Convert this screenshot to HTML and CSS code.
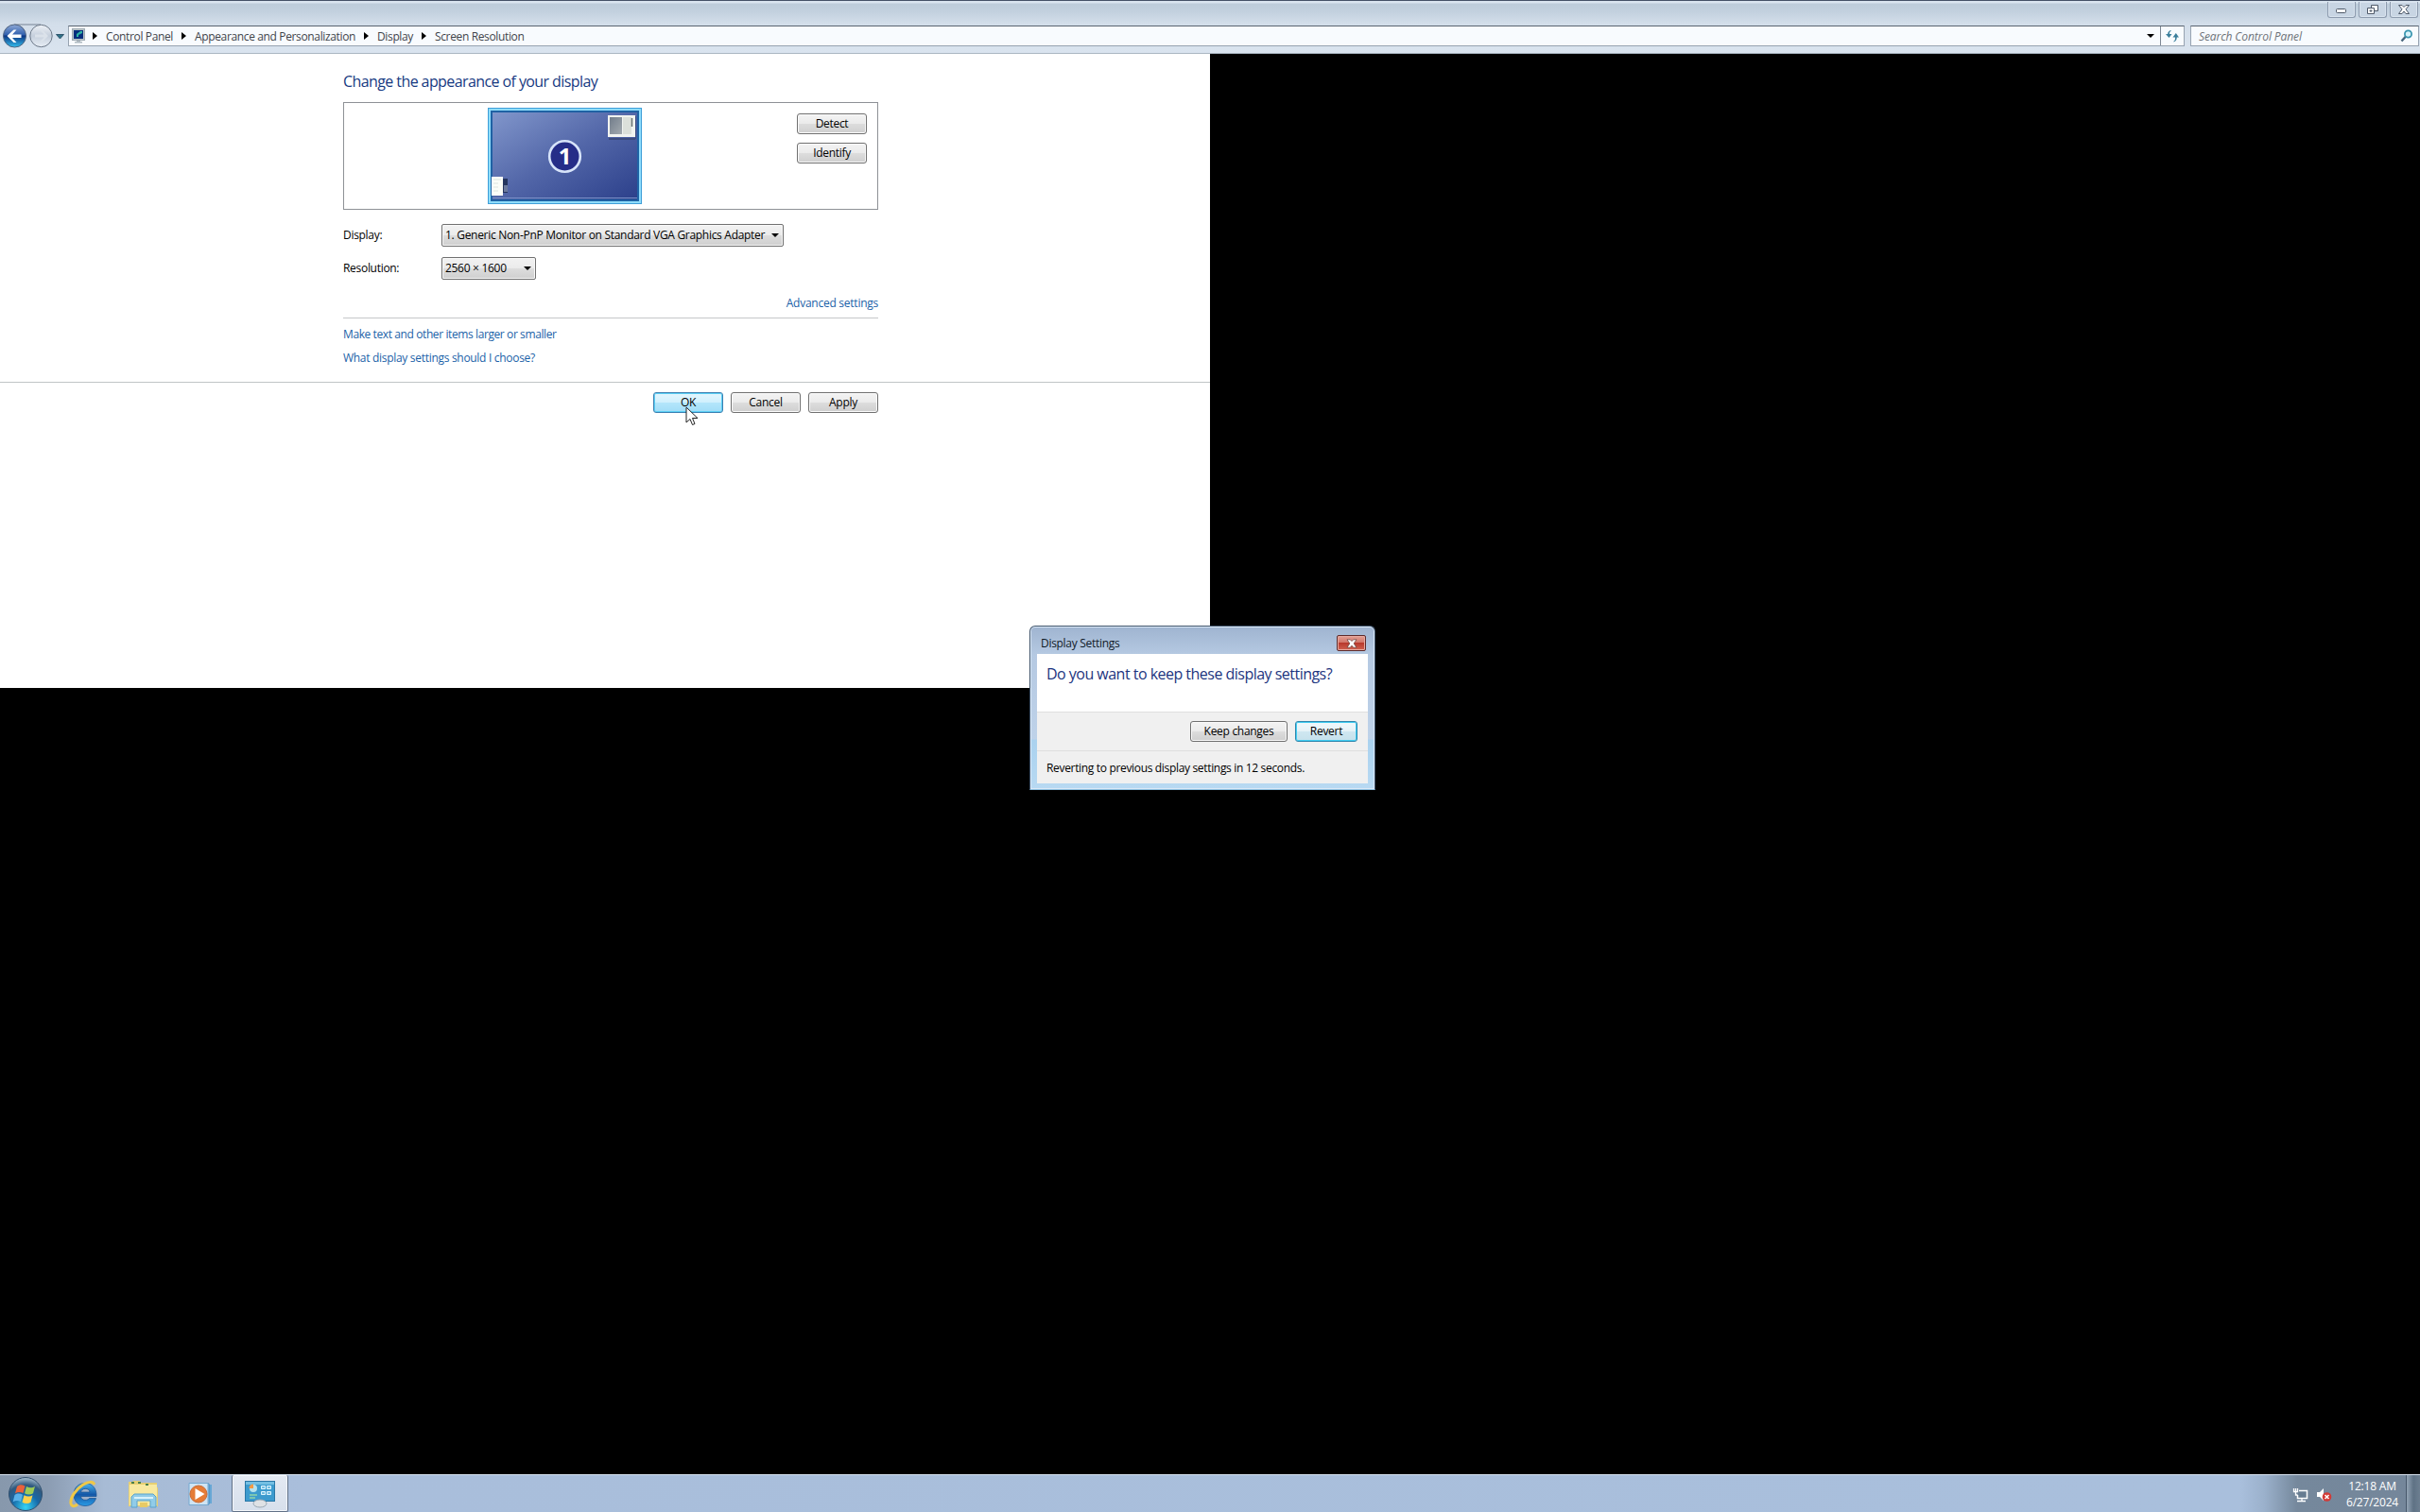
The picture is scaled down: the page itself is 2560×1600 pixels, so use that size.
FILE: index.html
```html
<!DOCTYPE html>
<html lang="en">
<head>
    <meta charset="UTF-8">
    <meta name="viewport" content="width=device-width, initial-scale=1.0">
    <title>Screen Resolution</title>
    <link rel="stylesheet" href="styles.css">
</head>
<body>
    <div class="desktop">
        <header class="explorer-bar">
            <div class="caption">
                <button class="caption-btn" aria-label="Minimize">
                    <svg width="14" height="12" viewBox="0 0 14 12"><rect x="1.5" y="5.5" width="10" height="4" rx="1" fill="#fff" stroke="#4d5868"/></svg>
                </button>
                <button class="caption-btn" aria-label="Restore">
                    <svg width="14" height="12" viewBox="0 0 14 12" fill="#fff" stroke="#4d5868"><path d="M5.500 1.500h7v6h-7z"/><path d="M1.500 4.500h7v6h-7z"/><path d="M4 7h2v1h-2z"/></svg>
                </button>
                <button class="caption-btn" aria-label="Close">
                    <svg width="14" height="12" viewBox="0 0 14 12"><path d="M1.500 1.500h3.500l2 2 2-2h3.500l-3.500 4.300 3.500 4.700H9l-2-2.500-2 2.500H1.500L5 5.800z" fill="#fff" stroke="#4d5868"/></svg>
                </button>
            </div>
            <div class="nav">
                <svg class="travel" width="72" height="28" viewBox="0 0 72 28">
                    <defs>
                        <linearGradient id="back" x1="0" y1="0" x2="0" y2="1">
                            <stop offset="0" stop-color="#8fa9d6"/>
                            <stop offset=".45" stop-color="#3160ae"/>
                            <stop offset=".5" stop-color="#0c3684"/>
                            <stop offset="1" stop-color="#35c0ee"/>
                        </linearGradient>
                        <linearGradient id="fwd" x1="0" y1="0" x2="0" y2="1">
                            <stop offset="0" stop-color="#eef2f7"/>
                            <stop offset=".5" stop-color="#c5cfdc"/>
                            <stop offset="1" stop-color="#e8eef5"/>
                        </linearGradient>
                    </defs>
                    <path d="M15 2h28" stroke="#a4b0bf" stroke-width="2"/>
                    <circle cx="15.500" cy="14" r="12" fill="url(#back)" stroke="#4f6380"/>
                    <path d="M7.500 14l7-6.500h3l-4.500 5h9.500v3.500H13l4.500 5h-3z" fill="#fff"/>
                    <circle cx="43.500" cy="14" r="11.700" fill="url(#fwd)" stroke="#6c7888"/>
                    <path d="M51 14l-6-6h-2.500l4 4.500H37v3h9.500l-4 4.500H45z" fill="#dbe2ea"/>
                    <path d="M59.500 12.500h8l-4 4.500z" fill="#2f7186" stroke="#31566e"/>
                </svg>
                <div class="address">
                    <svg class="monitor-icon" width="16" height="16" viewBox="0 0 16 16">
                        <rect x=".5" y=".5" width="13" height="12" fill="#b9c4c9" stroke="#9faab2"/>
                        <rect x="2" y="2" width="10" height="9" fill="#062e7c"/>
                        <path d="M5 9V6l4-3h2v2L7 7v2z" fill="#2eb3a4"/>
                        <path d="M5 13h4v1h2v1.500H3V14h2z" fill="#aeb9c0"/>
                    </svg>
                    <i class="crumb-arrow first"></i>
                    <span>Control Panel</span>
                    <i class="crumb-arrow"></i>
                    <span>Appearance and Personalization</span>
                    <i class="crumb-arrow"></i>
                    <span>Display</span>
                    <i class="crumb-arrow"></i>
                    <span>Screen Resolution</span>
                    <i class="down-arrow"></i>
                    <div class="refresh">
                        <svg width="16" height="16" viewBox="0 0 16 16" fill="#3b7f9c"><path d="M6.500 2v1C5 3.500 5 5 5 6h2.500L4.500 10 1 6h2.200C3.200 4 4.500 2.500 6.500 2z"/><path d="M9.500 14.500v-1C11 13 11 11.500 11 9.500H8.500L11.800 5l3.200 4.500h-2.200c0 2.500-1.300 4.500-3.300 5z"/></svg>
                    </div>
                </div>
                <div class="search">
                    <span>Search Control Panel</span>
                    <svg width="14" height="14" viewBox="0 0 14 14" fill="none"><path d="M1.500 12.500l4.500-5" stroke="#48657c" stroke-width="2.400"/><circle cx="8.500" cy="5" r="3.600" fill="#d8f3fa" stroke="#3a96b0" stroke-width="1.800"/></svg>
                </div>
            </div>
        </header>

        <main class="content">
            <section class="settings">
                <h1>Change the appearance of your display</h1>
                <div class="preview">
                    <div class="monitor">
                        <svg width="163" height="102" viewBox="0 0 163 102">
                            <defs>
                                <linearGradient id="screen" x1="0" y1="0" x2="1" y2="1">
                                    <stop offset="0" stop-color="#8196cb"/>
                                    <stop offset=".5" stop-color="#5266a8"/>
                                    <stop offset="1" stop-color="#2c408b"/>
                                </linearGradient>
                                <linearGradient id="pane" x1="0" y1="0" x2="1" y2="1">
                                    <stop offset="0" stop-color="#727d8b"/>
                                    <stop offset="1" stop-color="#a3aaaf"/>
                                </linearGradient>
                            </defs>
                            <rect width="163" height="102" fill="#3f9fd8"/>
                            <rect x="1" y="1" width="161" height="100" fill="#8edcfb"/>
                            <rect x="3" y="3" width="157" height="96" fill="#1f62a4"/>
                            <rect x="5" y="5" width="153" height="92" fill="url(#screen)"/>
                            <path d="M5 95.500h153" stroke="#7991c7"/>
                            <path d="M128 32h28v2h-28zM156 9h1v24h-1z" fill="#3c4b7e"/>
                            <rect x="127" y="8" width="29" height="23" fill="#f1f3f0"/>
                            <rect x="129" y="10" width="13" height="18" fill="url(#pane)"/>
                            <rect x="143" y="10" width="9" height="18" fill="#dce0da"/>
                            <path d="M152.500 11v9" stroke="#687173" stroke-width="1.500"/>
                            <rect x="4" y="73" width="12" height="20" fill="#fbfdf8"/>
                            <path d="M6 76h8M6 80h5M6 84h5M6 88h5" stroke="#dde4df"/>
                            <rect x="16" y="75" width="5" height="15" fill="#25355f"/>
                            <path d="M17 82h4v7h-4z" fill="#6c7a9e"/>
                            <circle cx="81.500" cy="51.500" r="16.300" fill="#252d88" stroke="#d7e4fa" stroke-width="2.600"/>
                        </svg>
                        <span class="monitor-number">1</span>
                    </div>
                    <div class="preview-buttons">
                        <button class="btn">Detect</button>
                        <button class="btn">Identify</button>
                    </div>
                </div>
                <div class="row">
                    <label>Display:</label>
                    <div class="select wide"><span>1. Generic Non-PnP Monitor on Standard VGA Graphics Adapter</span><i class="down-arrow"></i></div>
                </div>
                <div class="row">
                    <label>Resolution:</label>
                    <div class="select"><span>2560 × 1600</span><i class="down-arrow"></i></div>
                </div>
                <a class="advanced">Advanced settings</a>
                <div class="links">
                    <a class="link-larger">Make text and other items larger or smaller</a>
                    <a class="link-choose">What display settings should I choose?</a>
                </div>
            </section>
            <footer class="actions">
                <button class="btn hot">OK</button>
                <button class="btn">Cancel</button>
                <button class="btn">Apply</button>
            </footer>
        </main>

        <div class="dialog">
            <div class="dialog-title">
                <span>Display Settings</span>
                <button class="dialog-close" aria-label="Close">
                    <svg width="12" height="10" viewBox="0 0 12 10"><path d="M1 .8h3.300L6 2.500 7.700.8H11L8.200 4.900 11 9.200H7.700L6 7.200 4.300 9.200H1l2.800-4.300z" fill="#fff" stroke="#70453f" stroke-width=".8"/></svg>
                </button>
            </div>
            <div class="dialog-body">
                <p class="question">Do you want to keep these display settings?</p>
                <div class="dialog-buttons">
                    <button class="btn keep">Keep changes</button>
                    <button class="btn default">Revert</button>
                </div>
                <p class="countdown">Reverting to previous display settings in 12 seconds.</p>
            </div>
        </div>

        <footer class="taskbar">
            <svg class="orb" width="38" height="38" viewBox="0 0 38 38">
                <defs>
                    <radialGradient id="orb" cx=".5" cy=".9" r=".9">
                        <stop offset="0" stop-color="#35d4f5"/>
                        <stop offset=".45" stop-color="#1769a8"/>
                        <stop offset=".75" stop-color="#31597e"/>
                        <stop offset="1" stop-color="#a9c1d2"/>
                    </radialGradient>
                </defs>
                <circle cx="19" cy="19" r="17.500" fill="url(#orb)" stroke="#31506f"/>
                <path d="M10 11c3-2.500 5.500-2 8.500-.5l-2 7.500c-3-1.500-5.500-1.500-8.500.3z" fill="#e9623b"/>
                <path d="M20 11c3 1.500 6 1.800 9-.3l-2 7.600c-3 2-6 1.500-9 0z" fill="#9fcb56"/>
                <path d="M7.500 20c3-2 5.500-1.800 8.500-.3l-2 7.300c-3-1.500-5.500-1.300-8.300.3z" fill="#5ab1e8"/>
                <path d="M17.500 20.300c3 1.500 6 1.800 9 0l-2 7.500c-3 2-6 1.500-9 0z" fill="#fbd04c"/>
            </svg>
            <svg class="task-icon ie" width="32" height="32" viewBox="0 0 32 32">
                <defs>
                    <linearGradient id="ie" x1="0" y1="0" x2="0" y2="1">
                        <stop offset="0" stop-color="#4cb7ef"/>
                        <stop offset=".5" stop-color="#1458a8"/>
                        <stop offset="1" stop-color="#2a9be5"/>
                    </linearGradient>
                </defs>
                <path d="M29 18.500H12.500c.3 2.500 2 3.800 4.500 3.800 2.200 0 3.500-.6 4.500-1.800h7C27 25.500 23 28.500 17 28.500 10 28.500 5 23.500 5 16.500S10 4.500 17 4.500s12.500 5 12 14zM22 14c-.4-2.500-2-3.600-4.700-3.600s-4.300 1.300-4.800 3.600z" fill="url(#ie)" stroke="#174f8f" stroke-width=".7"/>
                <path d="M27 6C25 2 20 3 15 6 7 11 1 20 2 26c.8 3.500 4 3.500 7 1" fill="none" stroke="#efc847" stroke-width="3"/>
            </svg>
            <svg class="task-icon folder" width="32" height="30" viewBox="0 0 32 30">
                <path d="M0 2h4l1-1h7v2h18v5h1v20H0z" fill="#e7cf72"/>
                <path d="M1 5h29v22H1z" fill="#f8e9a0"/>
                <path d="M3 3h3M10 3h3M18 5h3" stroke="#49804a" stroke-width="2"/>
                <path d="M3 29V18l3-3h20l3 3v11h-6v-7H9v7z" fill="#91cce8" stroke="#5aa3cd"/>
                <path d="M6 19h20" stroke="#d9f2fb" stroke-width="2"/>
                <path d="M12 29v-5h8v5" fill="#e8ca65"/>
            </svg>
            <svg class="task-icon wmp" width="28" height="28" viewBox="0 0 28 28">
                <path d="M7 4h18v20H7z" fill="#67a7d5"/>
                <path d="M4 3h18v22H4z" fill="#a2c9e5" stroke="#458cc0"/>
                <path d="M1 2.500h20v23H1z" fill="#cfe4f3" stroke="#76a9d0"/>
                <circle cx="11" cy="14" r="9" fill="#e57c36" stroke="#c86b37"/>
                <path d="M7.500 8l10 6-10 6z" fill="#fff"/>
            </svg>
            <div class="task-button">
                <svg width="34" height="30" viewBox="0 0 34 30">
                    <rect x="1.500" y="1.500" width="31" height="21" fill="#3c9bce" stroke="#2a78a7"/>
                    <path d="M2 2h30v3H2z" fill="#73bfe2"/>
                    <circle cx="10" cy="9" r="4" fill="#b6e2ee"/><path d="M10 9V4.500A4.500 4.500 0 0 0 5.500 9z" fill="#f19a45"/>
                    <path d="M6 16h8M6 19h6" stroke="#8fd3a9" stroke-width="1.500"/>
                    <path d="M18.500 6.500h4v3h-4zM24.500 6.500h4v3h-4zM18.500 12.500h4v3h-4zM24.500 12.500h4v3h-4z" fill="#75bfe2" stroke="#def4fd"/>
                    <ellipse cx="17" cy="25" rx="7" ry="4" fill="#dfe2e5" stroke="#9aa8b4"/>
                </svg>
            </div>
            <div class="tray">
                <svg width="18" height="16" viewBox="0 0 18 16" fill="none" stroke="#fff"><path d="M7 3.500h8.500v8H5.500V8" fill="#667c91" stroke-width="1.500"/><path d="M1.500 1v3.500h4V1M3.500 1v7h2M5 14.500h9M10 12v2" stroke-width="1.300"/></svg>
                <svg width="18" height="16" viewBox="0 0 18 16"><path d="M1 5h3l4-4v13l-4-4H1z" fill="#fff"/><circle cx="11.500" cy="10" r="4.800" fill="#d33b37"/><path d="M9.500 8l4 4M13.500 8l-4 4" stroke="#fff" stroke-width="1.500"/></svg>
                <div class="clock"><span class="time">12:18 AM</span><span>6/27/2024</span></div>
            </div>
            <div class="show-desktop"></div>
        </footer>

        <svg class="cursor" width="14" height="22" viewBox="0 0 14 22"><path d="M1 1v16l4-3.500 2.500 6 2.500-1-2.500-6H13z" fill="#fff" stroke="#222"/></svg>
    </div>
</body>
</html>
```

FILE: styles.css
```css
* {
    box-sizing: border-box;
}
body {
    margin: 0;
    background: #000;
    color: #000;
    font-family: 'Open Sans', 'Noto Sans', sans-serif;
    font-size: 12px;
    line-height: 18px;
    letter-spacing: -0.3px;
}
h1, p {
    margin: 0;
    font-weight: normal;
}
button {
    padding: 0;
    font: inherit;
    letter-spacing: inherit;
    color: inherit;
}
svg {
    display: block;
    flex: none;
}
.desktop {
    position: relative;
    width: 2560px;
    height: 1600px;
    display: flex;
    flex-direction: column;
    overflow: hidden;
}

/* explorer window */
.explorer-bar {
    height: 57px;
    border-top: 1px solid #445267;
    border-bottom: 1px solid #aab6c2;
    background: linear-gradient(#d9e4ef 0, #d9e4ef 2px, #bdccda 3px, #c2d0de 11px, #d3deea 24px, #dae4ef 100%);
}
.caption {
    height: 23px;
    padding: 1px 2px 0 0;
    display: flex;
    justify-content: flex-end;
    gap: 3px;
}
.caption-btn {
    width: 30px;
    height: 17px;
    display: flex;
    align-items: center;
    justify-content: center;
    border: 1px solid #8d9bae;
    border-top: 0;
    border-radius: 0 0 3px 3px;
    background: #c8d5e3;
    box-shadow: inset 0 0 0 1px #d9e3ee;
}
.nav {
    height: 28px;
    display: flex;
    align-items: center;
}
.address, .search {
    height: 22px;
    display: flex;
    align-items: center;
    border: 1px solid #97a3b1;
    border-top-color: #59636f;
    background: #f8fbfe;
    color: #3f444b;
}
.address {
    width: 2239px;
    padding-left: 3px;
    letter-spacing: -0.36px;
}
.address span, .search span {
    padding-top: 1px;
    white-space: nowrap;
}
.crumb-arrow {
    width: 5px;
    margin: 0 9px;
    border: 4px solid transparent;
    border-left: 5px solid #000;
    border-right: 0;
}
.crumb-arrow.first {
    margin-left: 6px;
}
.down-arrow {
    width: 8px;
    margin-left: auto;
    border: 4px solid transparent;
    border-top-color: #000;
    border-bottom: 0;
}
.address .down-arrow {
    margin-right: 6px;
}
.refresh {
    width: 25px;
    align-self: stretch;
    display: flex;
    align-items: center;
    justify-content: center;
    border-left: 1px solid #7d8894;
}
.search {
    width: 242px;
    margin-left: 6px;
    padding: 0 5px 0 8px;
    justify-content: space-between;
    font-style: italic;
    letter-spacing: -0.1px;
    color: #6e7379;
}
.content {
    width: 1280px;
    height: 671px;
    padding-top: 17px;
    background: #fff;
}
.settings {
    width: 566px;
    height: 330px;
    margin-left: 363px;
    display: flex;
    flex-direction: column;
}
h1 {
    font-size: 16px;
    line-height: 24px;
    letter-spacing: -0.59px;
    color: #173a82;
}
.preview {
    height: 114px;
    margin-top: 10px;
    display: flex;
    justify-content: space-between;
    border: 1px solid #8e9196;
    padding: 5px 11px 0 152px;
}
.monitor {
    position: relative;
}
.monitor-number {
    position: absolute;
    top: 38px;
    left: 71px;
    width: 21px;
    line-height: 26px;
    text-align: center;
    font-size: 24px;
    font-weight: bold;
    letter-spacing: 0;
    color: #fff;
}
.preview-buttons {
    padding-top: 6px;
    display: flex;
    flex-direction: column;
    gap: 9px;
}
.btn {
    width: 74px;
    height: 22px;
    border: 1px solid #707070;
    border-radius: 3px;
    background: linear-gradient(#f3f3f3, #ebebeb 49%, #dddddd 50%, #cfcfcf);
    box-shadow: inset 0 0 0 1px #fafafa;
    line-height: 18px;
}
.btn.hot {
    border-color: #3c7fb1;
    background: linear-gradient(#e4f6fe, #d0f0fd 49%, #b4e6fb 50%, #a1ddf7);
    box-shadow: inset 0 0 0 1px #5bd0f5;
}
.btn.default {
    width: 66px;
    border-color: #2f86ad;
    background: linear-gradient(#f1f8fb, #e5f2f7 49%, #cfe7f1 50%, #c6e1ec);
    box-shadow: inset 0 0 0 1px #41cdf2;
}
.row {
    height: 24px;
    margin-top: 15px;
    display: flex;
    align-items: center;
}
.row + .row {
    margin-top: 11px;
}
.row label {
    width: 104px;
}
.select {
    width: 100px;
    height: 24px;
    padding: 0 4px 0 3px;
    display: flex;
    align-items: center;
    border: 1px solid #707070;
    border-radius: 2px;
    background: linear-gradient(#f2f2f2, #ebebeb 49%, #dddddd 50%, #cfcfcf);
    box-shadow: inset 0 0 0 1px #f8f8f8;
    white-space: nowrap;
}
.select.wide {
    width: 362px;
}
.advanced, .links {
    color: #1b62a8;
}
.advanced {
    align-self: flex-end;
    margin-top: 16px;
    letter-spacing: -0.25px;
}
.links {
    margin-top: 6px;
    padding-top: 8px;
    display: flex;
    flex-direction: column;
    gap: 7px;
    border-top: 1px solid #c5c7ca;
}
.link-larger {
    letter-spacing: -0.4px;
}
.actions {
    padding: 10px 351px 0 0;
    display: flex;
    justify-content: flex-end;
    gap: 8px;
    border-top: 1px solid #c0c4c6;
}

/* confirmation dialog */
.dialog {
    position: absolute;
    top: 662px;
    left: 1089px;
    width: 366px;
    height: 174px;
    padding: 1px 7px 7px;
    border: 1px solid #40546b;
    border-bottom-color: #8fc0df;
    border-radius: 6px 6px 0 0;
    background: linear-gradient(#9fb4d0, #b5c9e2 30px, #bed2e9 119px, #aad2ef 120px, #b8d9f2);
    box-shadow: inset 0 0 0 1px #dbe9f7;
}
.dialog-title {
    height: 28px;
    padding: 0 2px 0 4px;
    display: flex;
    align-items: center;
    justify-content: space-between;
    color: #101a28;
}
.dialog-title span {
    padding-top: 6px;
}
.dialog-close {
    width: 31px;
    height: 17px;
    margin-top: 5px;
    display: flex;
    align-items: center;
    justify-content: center;
    border: 1px solid #5e2b2b;
    border-radius: 2px;
    background: linear-gradient(#e3a196, #d07265 49%, #b8392c 50%, #cf6250);
    box-shadow: inset 0 0 0 1px #e7aaa0;
}
.dialog-body {
    height: 137px;
    background: #f0f0f0;
}
.question {
    height: 62px;
    padding: 8px 10px 0;
    background: #fff;
    border-bottom: 1px solid #dfdfdf;
    font-size: 16px;
    line-height: 26px;
    letter-spacing: -0.52px;
    color: #1d3580;
}
.dialog-buttons {
    height: 41px;
    padding: 9px 11px 0 0;
    display: flex;
    justify-content: flex-end;
    gap: 8px;
    border-bottom: 1px solid #dfdfdf;
}
.btn.keep {
    width: 103px;
}
.countdown {
    padding: 9px 10px 0;
    letter-spacing: -0.33px;
}

/* taskbar */
.taskbar {
    height: 40px;
    margin-top: auto;
    display: flex;
    align-items: center;
    border-top: 1px solid #d7e2ee;
    background: linear-gradient(90deg, #8798ac 0, #8b9cb2 50px, #a7bbd5 110px, #a9bedb 320px, #a9bfdc 2370px, #9bb1cc 2395px, #75889c 2430px, #74869a 100%);
}
.orb {
    margin-left: 8px;
}
.ie {
    margin-left: 27px;
}
.folder {
    margin-left: 31px;
}
.wmp {
    margin-left: 31px;
}
.task-button {
    width: 60px;
    height: 39px;
    margin-left: 18px;
    padding-top: 5px;
    display: flex;
    justify-content: center;
    border: 1px solid #617187;
    border-top: 0;
    border-radius: 2px;
    background: linear-gradient(#e3e9f2, #d7e0ec);
    box-shadow: inset 0 0 0 1px #f3f6fa;
}
.tray {
    margin-left: auto;
    display: flex;
    align-items: center;
    gap: 7px;
    color: #fff;
}
.tray svg {
    margin-top: 2px;
}
.clock {
    width: 70px;
    padding-right: 1px;
    display: flex;
    flex-direction: column;
    align-items: center;
    line-height: 17px;
    letter-spacing: -0.2px;
}
.show-desktop {
    width: 15px;
    align-self: stretch;
    border-left: 1px solid #47586b;
    background: linear-gradient(90deg, #93a4b5, #5f7285 50%, #6c7e90);
}
.cursor {
    position: absolute;
    top: 430px;
    left: 725px;
}
```
